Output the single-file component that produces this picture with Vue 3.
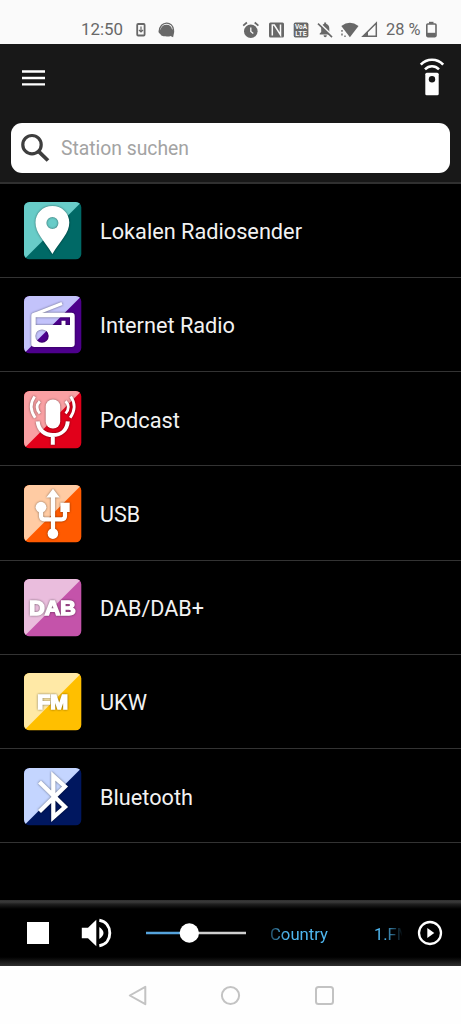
<script setup>
const stations = [
  { id: 'local', label: 'Lokalen Radiosender', light: '#68ccc8', dark: '#006966', width: 202 },
  { id: 'internet', label: 'Internet Radio', light: '#c3c3fb', dark: '#4d008c', width: 135 },
  { id: 'podcast', label: 'Podcast', light: '#f9a0a3', dark: '#e1001a', width: 80 },
  { id: 'usb', label: 'USB', light: '#ffcba3', dark: '#ff5a00', width: 40 },
  { id: 'dab', label: 'DAB/DAB+', light: '#eabddd', dark: '#c453aa', width: 104 },
  { id: 'fm', label: 'UKW', light: '#ffe9a6', dark: '#ffbf00', width: 47 },
  { id: 'bluetooth', label: 'Bluetooth', light: '#c4d5ff', dark: '#00175f', width: 93 },
]
</script>

<template>
  <div class="phone">
    <header class="status">
      <svg width="461" height="44" viewBox="0 0 461 44" fill="#686868">
        <text x="81" y="35.3" font-size="17" textLength="42" lengthAdjust="spacingAndGlyphs">12:50</text>
        <g fill="none" stroke="#686868">
          <rect x="137.2" y="24" width="7.4" height="11.500" rx="1" stroke-width="1.800" />
          <path d="M141 26.500V32M139 30l2 2 2-2" stroke-width="1.200" />
        </g>
        <path d="M159.300 31.500C159.500 20.500 173.500 20.500 173.600 30.500" fill="none" stroke="#686868" stroke-width="1.300" />
        <path d="M166.500 24.800a5.500 5.500 0 0 1 5.500 4.500q2.800.3 2.100 3.200l-1 4.800-2.600-1.200q-2 .9-5 .2-4.500 0-5-2-2.500-1.200-1.900-3.300.4-1.600 2-1.500a6 6 0 0 1 5.900-4.700z" />
        <g>
          <circle cx="250.800" cy="31.200" r="6.800" />
          <path d="M243.200 25.700l3.700-3.200M258.400 25.700l-3.700-3.200" stroke="#686868" stroke-width="1.700" />
          <path d="M250.800 27.500v4l2.500 2" fill="none" stroke="#fafafa" stroke-width="1.300" />
        </g>
        <rect x="269" y="22.500" width="15" height="15" rx="1.500" />
        <path d="M272.300 35.500v-10.500l2 .1 6.200 9.800V24.500" fill="none" stroke="#fafafa" stroke-width="1.500" />
        <rect x="293.700" y="22.500" width="14.700" height="15" rx="1.800" />
        <g fill="#fafafa" font-weight="700">
          <text x="295" y="29.300" font-size="6.800" textLength="12" lengthAdjust="spacingAndGlyphs">VoA</text>
          <text x="295.200" y="36.300" font-size="7.400" textLength="11.500" lengthAdjust="spacingAndGlyphs">LTE</text>
        </g>
        <path d="M319.700 34.500v-1l1.500-1.500v-3.500q0-3.700 3-4.700v-1.300h1.900v1.300q3.200 1 3.200 4.700v3.500l1.500 1.500v1zM323.500 35.300h3.400q-.2 1.900-1.700 1.900T323.500 35.300z" />
        <path d="M319.300 22.800l14 13.500" stroke="#fafafa" stroke-width="1.600" />
        <path d="M318 23.700l14 13.500" stroke="#686868" stroke-width="1.600" />
        <path d="M341.300 26q8.500-6.500 17.200 0l-8.600 11.200z" />
        <path d="M342 30v1.800M342 33.500v2M345 35.500v1.500" stroke="#686868" stroke-width="1.400" />
        <path d="M363 36.200L376.300 23V36.200z" fill="none" stroke="#686868" stroke-width="1.500" />
        <path d="M362 36.900L368 31v5.900z" />
        <text x="386" y="35.300" font-size="17" textLength="34.500" lengthAdjust="spacingAndGlyphs">28 %</text>
        <path d="M429 21.800h4.500v2H429z" />
        <rect x="426.800" y="24" width="9.200" height="12.600" rx="1" fill="none" stroke="#686868" stroke-width="1.600" />
        <path d="M427 32.800h8.800v4H427z" />
      </svg>
    </header>

    <section class="top">
      <div class="toolbar">
        <svg class="menu" width="23" height="16" viewBox="0 0 23 16">
          <path d="M0 1.500h23M0 8h23M0 14.400h23" stroke="#fff" stroke-width="2.400" />
        </svg>
        <svg width="26" height="40" viewBox="0 0 26 40">
          <path d="M1.800 7.700q4.500-5 11.200-5t11.200 5M6 12.300q3-3 7-3t7 3" fill="none" stroke="#fff" stroke-width="2.600" />
          <path d="M7.800 15.700h10.400q1.500 0 1.500 1.500v19.700q0 1.400-1.400 1.400H7.700q-1.400 0-1.400-1.400V17.200Q6.300 15.700 7.800 15.700z" fill="#fff" />
          <circle cx="13" cy="22.200" r="3.200" fill="#181818" />
        </svg>
      </div>
      <div class="search">
        <svg width="30" height="30" viewBox="0 0 30 30" fill="none" stroke="#3e3e3e">
          <circle cx="12" cy="11.700" r="9.200" stroke-width="3.200" />
          <path d="M18.300 18.200l9.700 9.300" stroke-width="3.800" />
        </svg>
        <svg class="hint" width="140" height="30" viewBox="0 0 140 30">
          <text x="0" y="22.300" font-size="19.500" textLength="128" lengthAdjust="spacingAndGlyphs" fill="#a3a3a3">Station suchen</text>
        </svg>
      </div>
    </section>

    <main class="list">
      <div v-for="s in stations" :key="s.id" class="row">
        <svg class="tile" width="58" height="58" viewBox="0 0 58 58">
          <defs>
            <clipPath :id="'round-' + s.id"><rect x="0" y="0" width="57.300" height="57.300" rx="5.500" /></clipPath>
          </defs>
          <g :clip-path="`url(#round-${s.id})`">
            <rect width="58" height="58" :fill="s.dark" />
            <path d="M0 0H57.500L0 57.500z" :fill="s.light" />
          </g>
          <g class="glyph">
            <path v-if="s.id === 'local'" fill="#fff" fill-rule="evenodd" d="M28.400 4C18.500 4 11.500 11.500 11.500 20.500C11.500 31 20 38 28.400 52C36.800 38 45.300 31 45.300 20.500C45.300 11.500 38.300 4 28.400 4zM28.400 15a6 6 0 1 1 0 12a6 6 0 0 1 0-12z" />
            <g v-else-if="s.id === 'internet'">
              <path fill="#fff" fill-rule="evenodd" d="M10.500 16.700H47.500Q50.700 16.700 50.700 20V48Q50.700 51 47.500 51H10.500Q7.300 51 7.300 48V20Q7.300 16.700 10.500 16.700zM11.700 21.200V29H37.500V24.700H41.500V29H46V21.200zM18 33.400a6.700 6.700 0 1 0 0 13.400a6.700 6.700 0 0 0 0-13.400z" />
              <path d="M10 18.500L38 7.500" stroke="#fff" stroke-width="3" />
            </g>
            <g v-else-if="s.id === 'podcast'" fill="none" stroke="#fff">
              <rect x="21.700" y="8.500" width="14.500" height="29" rx="7" fill="#fff" stroke="none" />
              <path d="M13.700 30.300C14.500 39.500 21 44 28.800 44S43 39.500 43.800 30.300M28.800 43v10.800" stroke-width="4" />
              <path d="M15.800 10.300Q10.300 16 15.800 22.500M41.600 10.300Q47.100 16 41.600 22.500" stroke-width="2.700" />
              <path d="M10.700 5.500Q3.500 15.500 11.200 26.700M46.700 5.500Q53.900 15.500 46.200 26.700" stroke-width="2.800" />
            </g>
            <g v-else-if="s.id === 'usb'" fill="#fff">
              <path d="M29 3.700L35.700 12.500H22.300z" />
              <path d="M29 10V48M17 22V31Q17 34.300 20.500 34.300H37.500Q41 34.300 41 31V24" fill="none" stroke="#fff" stroke-width="4.200" />
              <circle cx="17" cy="22.200" r="5.400" />
              <path d="M36.400 17.700h9.300V27h-9.300z" />
              <circle cx="28.900" cy="48.600" r="5.300" />
            </g>
            <text v-else-if="s.id === 'dab'" class="mark" x="5.300" y="36" font-size="19.500" textLength="46.500" lengthAdjust="spacingAndGlyphs">DAB</text>
            <text v-else-if="s.id === 'fm'" class="mark" x="13.200" y="36" font-size="19.500" textLength="31" lengthAdjust="spacingAndGlyphs">FM</text>
            <path v-else d="M15.500 14L41 39L29.300 49.300V8L41 18.500L15.500 43.500" fill="none" stroke="#fff" stroke-width="4.200" />
          </g>
        </svg>
        <svg class="label" width="240" height="32" viewBox="0 0 240 32">
          <text x="0" y="24" font-size="22" :textLength="s.width" lengthAdjust="spacingAndGlyphs" fill="#f2f2f2">{{ s.label }}</text>
        </svg>
      </div>
    </main>

    <section class="player">
      <div class="stop"></div>
      <svg class="speaker" width="31" height="30" viewBox="0 0 31 30">
        <path d="M.800 9.700H7L15.300 1.800V28.200L7 20.300H.800zM18.300 9Q22.500 12 22.500 15T18.300 21z" fill="#fff" />
        <path d="M18.300 2.300C25.500 3.500 28.800 9 28.800 15S25.500 26.500 18.300 27.700" fill="none" stroke="#fff" stroke-width="2.900" />
      </svg>
      <svg class="slider" width="102" height="22" viewBox="0 0 102 22">
        <path d="M1 11H44" stroke="#55a3dc" stroke-width="2.400" />
        <path d="M44 11H101" stroke="#cfcfcf" stroke-width="2.400" />
        <circle cx="44.300" cy="11" r="9.700" fill="#fff" />
      </svg>
      <svg class="ticker" width="132" height="30" viewBox="0 0 132 30">
        <text x="0" y="21.500" font-size="16.500" textLength="58" lengthAdjust="spacingAndGlyphs">Country</text>
        <text x="104" y="21.500" font-size="16.500">1.FM</text>
      </svg>
      <svg class="play" width="26" height="26" viewBox="0 0 26 26">
        <circle cx="13" cy="13" r="11" fill="none" stroke="#fff" stroke-width="2.300" />
        <path d="M10.300 8L17.300 13L10.300 18z" fill="#fff" />
      </svg>
    </section>

    <nav class="nav">
      <svg width="461" height="58" viewBox="0 0 461 58" fill="none" stroke="#c3c3c3" stroke-width="2" stroke-linejoin="round">
        <path d="M129.800 29.500L145.300 20.800V38.200z" />
        <circle cx="230.500" cy="29.500" r="8.600" />
        <rect x="316" y="21" width="17" height="17" rx="2.500" />
      </svg>
    </nav>
  </div>
</template>

<style>
body { margin: 0; background: #000; }
</style>

<style scoped>
.phone {
  width: 461px;
  height: 1024px;
  display: flex;
  flex-direction: column;
  overflow: hidden;
  background: #000;
  font-family: Roboto, "Liberation Sans", sans-serif;
}
svg { display: block; flex: none; }
.status { height: 44px; flex: none; background: #fafafa; }
.top {
  height: 139.5px;
  flex: none;
  box-sizing: border-box;
  background: #181818;
  border-bottom: 2px solid #303030;
}
.toolbar {
  height: 79px;
  box-sizing: border-box;
  padding: 13px 16.5px 0 22px;
  display: flex;
  justify-content: space-between;
}
.menu { margin-top: 13px; }
.search {
  height: 49.5px;
  margin: 0 11px;
  padding-left: 9px;
  box-sizing: border-box;
  display: flex;
  align-items: center;
  gap: 11px;
  border-radius: 11px;
  background: #fff;
}
.list { height: 716.5px; flex: none; }
.row {
  height: 94.25px;
  box-sizing: border-box;
  padding: 2px 0 0 24px;
  display: flex;
  align-items: center;
  gap: 17.5px;
  border-bottom: 1.5px solid #333;
}
.glyph { filter: drop-shadow(0 0 0.8px rgba(0, 0, 0, 0.5)); }
.mark {
  font-family: "Liberation Sans", Arial, sans-serif;
  font-weight: 700;
  fill: #fff;
  stroke: #fff;
  stroke-width: 1.4;
}
.player {
  height: 66px;
  flex: none;
  box-sizing: border-box;
  padding-left: 26.5px;
  display: flex;
  align-items: center;
  background: linear-gradient(#303030 0, #3a3a3a 2px, #202020 4px, #0c0c0c 7px, #000 9px, #000 57px, #141414 61px, #303030 66px);
}
.stop { width: 22px; height: 22px; background: #fff; }
.speaker { margin-left: 32px; }
.slider { margin-left: 33.5px; }
.ticker {
  margin-left: 23px;
  fill: #4fb6ee;
  -webkit-mask-image: linear-gradient(90deg, rgba(0, 0, 0, 0.4), #000 16px, #000 114px, transparent 133px);
  mask-image: linear-gradient(90deg, rgba(0, 0, 0, 0.4), #000 16px, #000 114px, transparent 133px);
}
.play { margin-left: 15px; }
.nav { height: 58px; flex: none; background: #fefefe; }
</style>
